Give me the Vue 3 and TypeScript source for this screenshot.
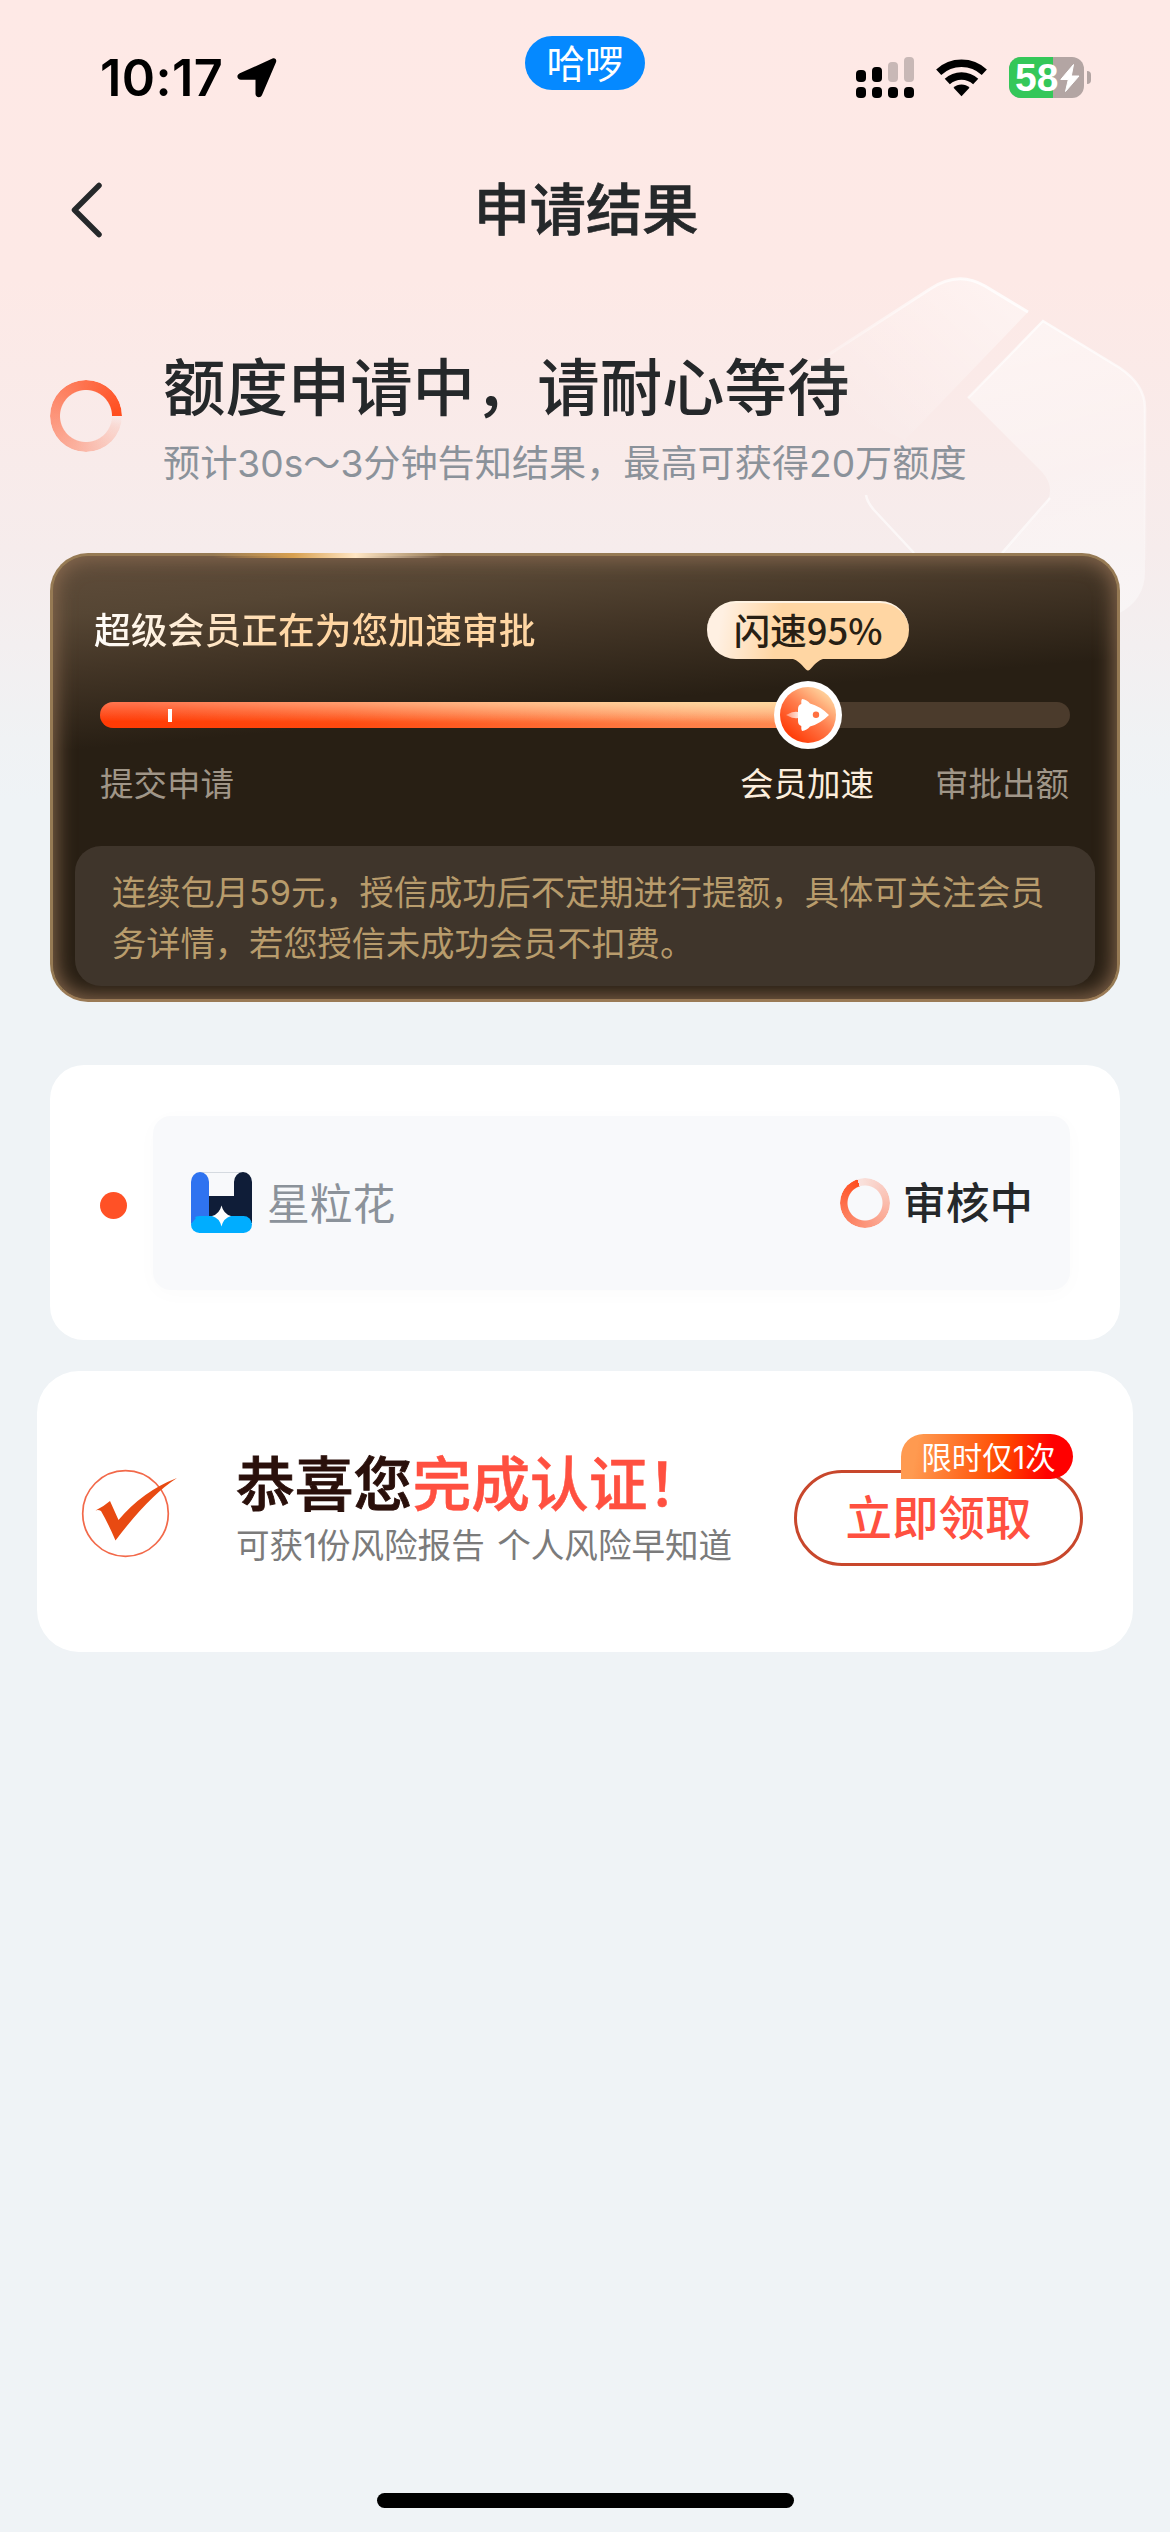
<script setup lang="ts">
import { ref } from 'vue'

interface Step {
  label: string
  active: boolean
}

const batteryLevel = ref(58)
const progress = ref(73)
const steps: Step[] = [
  { label: '提交申请', active: false },
  { label: '会员加速', active: true },
  { label: '审批出额', active: false },
]
</script>

<template>
  <div class="page">
    <svg class="emblem" width="420" height="380" viewBox="760 260 420 380">
      <defs>
        <linearGradient id="wingA" gradientUnits="userSpaceOnUse" x1="1010" y1="290" x2="870" y2="440">
          <stop offset="0" stop-color="#fff" stop-opacity=".45" />
          <stop offset="1" stop-color="#fff" stop-opacity="0" />
        </linearGradient>
        <linearGradient id="edgeA" gradientUnits="userSpaceOnUse" x1="980" y1="280" x2="780" y2="400">
          <stop offset="0" stop-color="#fff" stop-opacity=".8" />
          <stop offset="1" stop-color="#fff" stop-opacity="0" />
        </linearGradient>
        <linearGradient id="wingB" gradientUnits="userSpaceOnUse" x1="1040" y1="320" x2="1120" y2="610">
          <stop offset="0" stop-color="#fff" stop-opacity=".5" />
          <stop offset=".5" stop-color="#fff" stop-opacity=".32" />
          <stop offset="1" stop-color="#fff" stop-opacity=".4" />
        </linearGradient>
        <linearGradient id="edgeB" gradientUnits="userSpaceOnUse" x1="0" y1="320" x2="0" y2="560">
          <stop offset="0" stop-color="#fff" stop-opacity=".75" />
          <stop offset="1" stop-color="#fff" stop-opacity=".1" />
        </linearGradient>
      </defs>
      <path d="M780 386 L930 289 Q958 270 985 286 L1028 312 L905 440 Z" fill="url(#wingA)" />
      <path d="M780 386 L930 289 Q958 270 985 286 L1028 312" fill="none" stroke="url(#edgeA)" stroke-width="3" />
      <path d="M1043 321 L1120 368 Q1145 385 1145 408 L1145 572 Q1145 600 1118 614 L1000 614 L1000 556 L1042 509 Q1058 490 1042 472 L968 398 Z" fill="url(#wingB)" />
      <path d="M968 398 L1043 321 L1120 368 Q1145 385 1145 408 V560" fill="none" stroke="url(#edgeB)" stroke-width="2.5" />
      <path d="M866 495 Q867 502 874 510 L914 553 M1050 498 L1002 553" fill="none" stroke="#fff" stroke-opacity=".6" stroke-width="2.5" />
    </svg>

    <header class="status">
      <div class="clock">
        <span class="time">10:17</span>
        <svg width="40" height="40" viewBox="0 0 40 40"><path d="M35.500 0.600 C38 -.3 40 1.500 39 4.200 L25 37 C23.500 40.500 18.500 39.500 18.500 36 V21.800 H4 C.2 21.800 -1.200 17 2.800 15.300 Z" /></svg>
      </div>
      <div class="island">哈啰</div>
      <div class="indicators">
        <svg width="58" height="42" viewBox="0 0 58 42">
          <g fill="#c8b8b6"><rect x="32" y="5" width="10" height="20" rx="4" /><rect x="48" y="0" width="10" height="25" rx="4" /></g>
          <rect x="0" y="13" width="10" height="12" rx="4" /><rect x="16" y="10" width="10" height="15" rx="4" />
          <rect x="0" y="30" width="10" height="11" rx="4" /><rect x="16" y="30" width="10" height="11" rx="4" />
          <rect x="32" y="30" width="10" height="11" rx="4" /><rect x="48" y="30" width="10" height="11" rx="4" />
        </svg>
        <svg class="wifi" width="51" height="38" viewBox="0 0 51 38">
          <g fill="none" stroke="#000" stroke-width="7.500"><path d="M2.700 13.200 A33.500 33.500 0 0 1 48.300 13.200" /><path d="M11.300 22.600 A20.800 20.800 0 0 1 39.700 22.600" /></g>
          <path d="M17.500 28.800 A11.500 11.500 0 0 1 33.500 28.800 L25.500 37.300 Z" />
        </svg>
        <div class="battery">
          <div class="charge" :style="{ width: batteryLevel + '%' }"></div>
          <span class="level">{{ batteryLevel }}</span>
          <svg class="bolt" width="20" height="28" viewBox="0 0 20 28"><path d="M13.500 .5 L.8 15.500 H8.300 L5.500 27.500 L19 12 H11.300 Z" fill="#fff" stroke="#fff" stroke-linejoin="round" /></svg>
        </div>
        <span class="nub"></span>
      </div>
    </header>

    <nav class="nav">
      <svg class="back" width="36" height="60" viewBox="0 0 36 60"><path d="M30 5.500 L5.500 30 L30 54.500" fill="none" stroke="#25282a" stroke-width="5.500" stroke-linecap="round" stroke-linejoin="round" /></svg>
      <h1>申请结果</h1>
    </nav>

    <section class="hero">
      <div class="ring ring-lg"></div>
      <div class="hero-text">
        <h2>额度申请中，请耐心等待</h2>
        <p>预计30s～3分钟告知结果，最高可获得20万额度</p>
      </div>
    </section>

    <section class="boost">
      <div class="shine"></div>
      <h3>超级会员正在为您加速审批</h3>
      <div class="track">
        <div class="fill" :style="{ width: progress + '%' }"><i class="tick"></i></div>
        <div class="marker" :style="{ left: progress + '%' }">
          <div class="bubble">闪速95%
            <svg class="tail" width="40" height="13" viewBox="0 0 40 13"><path d="M0 0 C9 1 12 5 18 11.500 Q20 13.500 22 11.500 C28 5 31 1 40 0 Z" fill="#ffd6a3" /></svg>
          </div>
          <svg class="knob" width="68" height="68" viewBox="0 0 68 68">
            <defs>
              <linearGradient id="knobFill" x1=".2" y1=".9" x2=".85" y2=".1"><stop offset="0" stop-color="#ff3c08" /><stop offset=".5" stop-color="#ff7a4a" /><stop offset="1" stop-color="#ffd6a0" /></linearGradient>
              <linearGradient id="flame"><stop offset="0" stop-color="#fff" stop-opacity=".35" /><stop offset="1" stop-color="#fff" stop-opacity=".8" /></linearGradient>
            </defs>
            <circle cx="34" cy="34" r="34" fill="#fff" />
            <circle cx="34" cy="34" r="28" fill="url(#knobFill)" />
            <path d="M12 34 L18 31.200 Q22 30.200 24 31 V37 Q22 37.600 18 36.800 Z" fill="url(#flame)" />
            <path d="M28 18 Q33 18.500 36 22.500 Q46 25 55 34 Q46 43 36 45.500 Q33 49.300 28 50 Q27 49 27.300 45 Q24 44 24 40 V28 Q24 24 27.300 23 Q27 19 28 18 Z" fill="#fff" />
            <circle cx="42" cy="33.800" r="3.200" fill="#ff7040" />
          </svg>
        </div>
      </div>
      <div class="steps">
        <span v-for="step in steps" :key="step.label" :class="{ active: step.active }">{{ step.label }}</span>
      </div>
      <p class="notice">连续包月59元，授信成功后不定期进行提额，具体可关注会员<br />务详情，若您授信未成功会员不扣费。</p>
    </section>

    <section class="review">
      <i class="dot"></i>
      <div class="review-row">
        <svg class="logo" width="61" height="61" viewBox="0 0 61 61">
          <path d="M10 .5 H51" stroke="#d5dae0" />
          <path d="M18 24 H43 V10 A9 10 0 0 1 61 10 V51 H18 Z" fill="#0f1d38" />
          <path d="M0 10 A9 10 0 0 1 18 10 V50 H0 Z" fill="#2f73f0" />
          <rect y="44" width="61" height="17" rx="8.500" ry="8.500" fill="#00adff" />
          <path d="M0 44 V52 L5 46 Z" fill="#2f73f0" />
          <path d="M30.500 33.500 Q32.500 42 40 44 Q32.500 46 30.500 54.500 Q28.500 46 21 44 Q28.500 42 30.500 33.500 Z" fill="#fff" />
        </svg>
        <span class="lender">星粒花</span>
        <div class="ring ring-sm"></div>
        <span class="state">审核中</span>
      </div>
    </section>

    <section class="promo">
      <svg class="check" width="98" height="90" viewBox="0 0 98 90">
        <circle cx="44.500" cy="44.500" r="42.800" fill="none" stroke="#f2694a" stroke-width="1.700" />
        <path d="M14.500 41.500 Q22 38 29 32 L37.500 51 Q62 22 96 9 Q68 27 34.500 71.500 Q27 54 20 42 Q17.500 40.500 14.500 41.500 Z" fill="#e84a12" />
      </svg>
      <div class="promo-text">
        <h3>恭喜您<em>完成认证！</em></h3>
        <p>可获1份风险报告 个人风险早知道</p>
      </div>
      <div class="claim">
        立即领取
        <span class="badge">限时仅1次</span>
      </div>
    </section>

    <div class="home"></div>
  </div>
</template>

<style>
body {
  margin: 0;
}
</style>

<style scoped>
.page {
  position: relative;
  box-sizing: border-box;
  width: 1170px;
  height: 2532px;
  display: flex;
  flex-direction: column;
  overflow: hidden;
  background: linear-gradient(180deg, #fee9e6 0, #fde9e6 280px, #f6ecec 550px, #f0f2f4 740px, #eff3f6 800px);
  font-family: 'Noto Sans CJK SC', sans-serif;
  color: #25282a;
  white-space: nowrap;
}

h1,
h2,
h3,
p {
  margin: 0;
  font-weight: 500;
}

.emblem {
  position: absolute;
  left: 760px;
  top: 260px;
}

.status {
  display: grid;
  grid-template-columns: 525px 120px 1fr;
  height: 150px;
  color: #000;
}

.clock {
  display: flex;
  align-items: center;
  gap: 12px;
  height: 60px;
  margin: 48px 0 0 100px;
}

.time {
  width: 125px;
  font: 600 50.500px/60px Inter, sans-serif;
  letter-spacing: 0.4px;
}

.island {
  height: 54px;
  margin-top: 36px;
  border-radius: 27px;
  background: #0589ff;
  color: #fff;
  font-size: 38.500px;
  line-height: 50px;
  text-align: center;
}

.indicators {
  display: flex;
  align-items: flex-start;
  padding: 57px 0 0 211px;
}

.wifi {
  margin: 2px 22px 0;
}

.battery {
  position: relative;
  display: flex;
  align-items: center;
  box-sizing: border-box;
  width: 75px;
  height: 41px;
  padding-left: 6px;
  border-radius: 12px;
  background: #b3a5a3;
}

.charge {
  position: absolute;
  left: 0;
  top: 0;
  height: 100%;
  border-radius: 12px 0 0 12px;
  background: #34c759;
}

.level {
  position: relative;
  width: 45px;
  color: #fff;
  font: 700 39px/41px 'Liberation Sans', sans-serif;
}

.bolt {
  position: relative;
}

.nub {
  width: 4px;
  height: 13px;
  margin: 14px 0 0 3px;
  border-radius: 0 6px 6px 0;
  background: #b3a5a3;
}

.nav {
  display: grid;
  grid-template-columns: 170px 830px 170px;
  align-items: center;
  height: 120px;
}

.back {
  margin-left: 69px;
}

h1 {
  margin-top: -8px;
  padding-left: 2px;
  font-size: 56.200px;
  line-height: 80px;
  text-align: center;
  -webkit-text-stroke: 0.7px currentColor;
}

.hero {
  display: flex;
  height: 283px;
}

.ring {
  flex: none;
  border-radius: 50%;
}

.ring-lg {
  width: 72px;
  height: 72px;
  margin: 110px 41px 0 50px;
  background: conic-gradient(from 90deg, #ff4e1f00 0, #ff4e1f1c 20deg, #ff4e1f60 110deg, #ff4e1f98 200deg, #ff4e1f 355deg);
  mask: radial-gradient(circle, transparent 25.5px, #000 26.500px);
}

.hero-text h2 {
  margin-top: 69px;
  font-size: 62.4px;
  line-height: 90px;
}

.hero-text p {
  margin-top: 7px;
  color: #8b929a;
  font-family: Inter, 'Noto Sans CJK SC', sans-serif;
  font-size: 37.150px;
  font-weight: 400;
  line-height: 56px;
}

.boost {
  position: relative;
  box-sizing: border-box;
  width: 1070px;
  height: 449px;
  margin-left: 50px;
  padding: 30px 22px 0;
  border: 3px solid #967a54;
  border-bottom-color: #9a7a56;
  border-radius: 38px;
  background: linear-gradient(175deg, #604d39 0, #56452f 60px, #43351f 115px, #281f14 195px, #281f14 100%);
  background: linear-gradient(175deg, #604d3b 0, #564634 60px, #433526 115px, #281f14 195px, #281f14 100%);
  box-shadow: inset 0 0 20px 2px #8a6a50;
}

.shine {
  position: absolute;
  left: 160px;
  top: -3px;
  width: 230px;
  height: 5px;
  background: linear-gradient(90deg, #d89a4500, #d8a050 35%, #ffe6c4 62%, #fff0 100%);
}

.boost h3 {
  width: 446px;
  margin-left: 19px;
  font-size: 36.8px;
  line-height: 84px;
  background: linear-gradient(100deg, #fff 0, #ffd6a3 45%);
  background-clip: text;
  color: transparent;
}

.track {
  position: relative;
  width: 970px;
  height: 26px;
  margin: 32px 0 0 25px;
  border-radius: 13px;
  background: #4b3b2c;
}

.fill {
  position: relative;
  height: 100%;
  border-radius: 13px 0 0 13px;
  overflow: hidden;
  background: linear-gradient(180deg, #ffffff4d 0, #ffffff00 75%), linear-gradient(90deg, #ff3a04 0, #ff4a10 35%, #ff7d45 80%, #ff8a52 100%);
}

.fill::after {
  content: '';
  position: absolute;
  inset: 0;
  background: linear-gradient(180deg, #ffd9a0, #ffd9a000 85%);
  mask: linear-gradient(90deg, transparent 5%, #000 90%);
}

.tick {
  position: absolute;
  left: 68px;
  top: 7px;
  width: 4px;
  height: 13px;
  background: #fff;
  z-index: 1;
}

.marker {
  position: absolute;
  top: -101px;
  display: flex;
  flex-direction: column;
  align-items: center;
  width: 202px;
  margin-left: -101px;
}

.bubble {
  position: relative;
  box-sizing: border-box;
  width: 202px;
  height: 58px;
  border-top: 2px solid #fff3e2;
  border-radius: 29px;
  background: linear-gradient(100deg, #fff0e2 8%, #ffd6a3 36%);
  color: #281f14;
  font-size: 36.500px;
  font-weight: 500;
  line-height: 54px;
  text-align: center;
}

.tail {
  position: absolute;
  left: 81px;
  top: 55px;
}

.knob {
  margin-top: 22px;
}

.steps {
  display: flex;
  width: 970px;
  margin: 29px 0 0 25px;
  color: #a09688;
  font-size: 33.500px;
  line-height: 50px;
}

.steps .active {
  margin: 0 61px 0 auto;
  color: #fceedd;
}

.steps span:last-child {
  margin-right: 1px;
}

.notice {
  box-sizing: border-box;
  width: 1020px;
  height: 140px;
  margin-top: 39px;
  padding: 21px 0 0 37px;
  border-radius: 26px;
  background: #3f352b;
  color: #b89c6c;
  font-family: Inter, 'Noto Sans CJK SC', sans-serif;
  font-size: 34.250px;
  font-weight: 400;
  line-height: 51px;
}

.review {
  display: flex;
  align-items: center;
  box-sizing: border-box;
  width: 1070px;
  height: 275px;
  margin: 63px 0 0 50px;
  padding: 0 50px;
  border-radius: 34px;
  background: #fff;
}

.dot {
  width: 27px;
  height: 27px;
  margin: 6px 26px 0 0;
  border-radius: 50%;
  background: #ff5126;
}

.review-row {
  display: flex;
  flex: 1;
  align-items: center;
  box-sizing: border-box;
  height: 174px;
  padding: 0 37px 0 38px;
  border-radius: 18px;
  background: #f8f9fb;
  box-shadow: 0 4px 22px #00000005;
}

.logo {
  margin-right: 15px;
}

.lender {
  margin-top: -4px;
  color: #8b929a;
  font-size: 42.800px;
  line-height: 60px;
}

.ring-sm {
  width: 50px;
  height: 50px;
  margin: 0 13px 0 auto;
  background: conic-gradient(from -18deg, #ff4e1f20 0, #ff4e1f50 90deg, #ff4e1f90 190deg, #ff4e1f 360deg);
  mask: radial-gradient(circle, transparent 17px, #000 18px);
}

.state {
  margin-top: -4px;
  font-size: 43.500px;
  font-weight: 500;
  line-height: 60px;
}

.promo {
  display: flex;
  box-sizing: border-box;
  width: 1096px;
  height: 281px;
  margin: 31px 0 0 37px;
  border-radius: 42px;
  background: #fff;
}

.check {
  margin: 98px 0 0 44px;
}

.promo-text {
  width: 558px;
  margin: 68px 0 0 57px;
}

.promo-text h3 {
  color: #2a100b;
  font-size: 58.800px;
  line-height: 84px;
  -webkit-text-stroke: 0.9px currentColor;
}

.promo-text em {
  color: #ff5040;
  font-style: normal;
  -webkit-text-stroke: 0.5px currentColor;
}

.promo-text p {
  margin-top: 3px;
  color: #7b7b7b;
  font-family: Inter, 'Noto Sans CJK SC', sans-serif;
  font-size: 33.600px;
  font-weight: 400;
  line-height: 40px;
  word-spacing: 3px;
}

.claim {
  position: relative;
  box-sizing: border-box;
  width: 289px;
  height: 96px;
  margin-top: 99px;
  border: 3px solid #c8472c;
  border-radius: 48px;
  color: #ff5040;
  font-size: 46.500px;
  font-weight: 500;
  line-height: 83px;
  text-align: center;
}

.badge {
  position: absolute;
  left: 104px;
  top: -39px;
  width: 172px;
  height: 45px;
  border-radius: 24px 24px 24px 0;
  background: linear-gradient(100deg, #ff9a50 10%, #ff4a00 58%, #ff0000 85%);
  color: #fff;
  font-family: Inter, 'Noto Sans CJK SC', sans-serif;
  font-size: 30.500px;
  font-weight: 400;
  line-height: 47px;
  text-indent: 3px;
}

.home {
  width: 417px;
  height: 15px;
  margin: auto auto 24px;
  border-radius: 8px;
  background: #000;
}
</style>
